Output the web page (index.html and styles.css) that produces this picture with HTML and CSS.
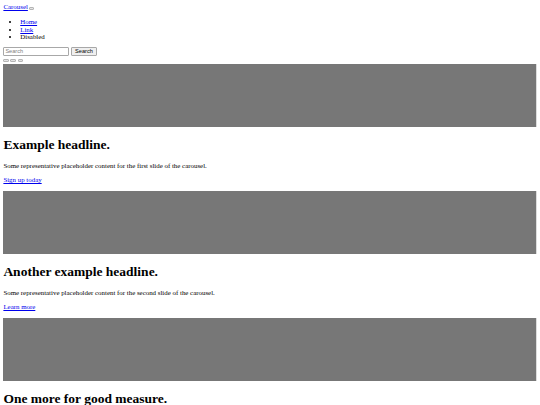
FILE: index.html
```html
<!DOCTYPE html>
<html lang="en">
<head>
<meta charset="utf-8">
<title>Carousel Template</title>
<link rel="stylesheet" href="styles.css">
</head>
<body>
<header>
  <nav>
    <div>
      <div class="brand-line">
        <a class="brand" href="#">Carousel</a>
        <button class="btn-empty" type="button"><span></span></button>
      </div>
      <div>
        <ul class="nav-list">
          <li><a href="#">Home</a></li>
          <li><a href="#">Link</a></li>
          <li><a class="disabled">Disabled</a></li>
        </ul>
        <form class="search">
          <input class="search-input" type="search" placeholder="Search" aria-label="Search">
          <button class="search-btn" type="submit">Search</button>
        </form>
      </div>
    </div>
  </nav>
</header>
<main>
  <div class="carousel">
    <div class="indicators">
      <button class="btn-empty" type="button"></button>
      <button class="btn-empty" type="button"></button>
      <button class="btn-empty" type="button"></button>
    </div>
    <div class="carousel-inner">
      <div class="item">
        <svg class="placeholder" width="100%" height="100%" xmlns="http://www.w3.org/2000/svg" aria-hidden="true" preserveAspectRatio="xMidYMid slice" focusable="false"><rect width="100%" height="100%" fill="#777"/></svg>
        <div class="container">
          <div class="caption">
            <h1>Example headline.</h1>
            <p>Some representative placeholder content for the first slide of the carousel.</p>
            <p><a href="#">Sign up today</a></p>
          </div>
        </div>
      </div>
      <div class="item">
        <svg class="placeholder" width="100%" height="100%" xmlns="http://www.w3.org/2000/svg" aria-hidden="true" preserveAspectRatio="xMidYMid slice" focusable="false"><rect width="100%" height="100%" fill="#777"/></svg>
        <div class="container">
          <div class="caption">
            <h1>Another example headline.</h1>
            <p>Some representative placeholder content for the second slide of the carousel.</p>
            <p><a href="#">Learn more</a></p>
          </div>
        </div>
      </div>
      <div class="item">
        <svg class="placeholder" width="100%" height="100%" xmlns="http://www.w3.org/2000/svg" aria-hidden="true" preserveAspectRatio="xMidYMid slice" focusable="false"><rect width="100%" height="100%" fill="#777"/></svg>
        <div class="container">
          <div class="caption">
            <h1>One more for good measure.</h1>
            <p>Some representative placeholder content for the third slide of this carousel.</p>
            <p><a href="#">Browse gallery</a></p>
          </div>
        </div>
      </div>
    </div>
  </div>
</main>
</body>
</html>
```
FILE: styles.css
```css
html {
  background: #fff;
}

body {
  margin: 3.375px;
  font-family: "Liberation Serif", "Times New Roman", serif;
  font-size: 6.9px;
  line-height: 7.7625px;
  color: #000;
}

a {
  color: #0000ee;
}

a.disabled {
  color: #000;
  text-decoration: none;
}

.brand-line {
  height: 7.7625px;
}

.nav-list {
  margin: 6.75px 0;
  padding-left: 16.875px;
}

.btn-empty {
  display: inline-block;
  box-sizing: border-box;
  width: 5.6px;
  height: 3.2px;
  padding: 0;
  margin: 0;
  border: 1px solid #b5b5b5;
  border-radius: 1px;
  background: #e4e4e4;
  vertical-align: baseline;
}

.brand-line .btn-empty {
  margin-left: -1px;
}

.search {
  display: flex;
  align-items: flex-start;
  gap: 1.6px;
  height: 8.86px;
  margin: -0.8px 0 0;
}

.search-input {
  box-sizing: border-box;
  width: 66px;
  height: 8.4px;
  margin: 0;
  padding: 0 1px;
  border: 1px solid #a8a8a8;
  border-radius: 1px;
  font-family: "Liberation Sans", Arial, sans-serif;
  font-size: 5.6px;
  background: #fff;
}

.search-input::placeholder {
  color: #808080;
}

.search-btn {
  box-sizing: border-box;
  width: 26px;
  height: 8.4px;
  margin: 0;
  padding: 0;
  border: 1px solid #a8a8a8;
  border-radius: 1px;
  background: #efefef;
  color: #000;
  font-family: "Liberation Sans", Arial, sans-serif;
  font-size: 5.6px;
  line-height: 6px;
}

.indicators {
  display: flex;
  align-items: flex-end;
  gap: 1.5px;
  height: 7.7625px;
}

.indicators .btn-empty {
  margin-bottom: 1.3px;
}

.placeholder {
  display: block;
  width: 100%;
  height: 63.28px;
}

h1 {
  font-size: 13.5px;
  line-height: 15.525px;
  margin: 10.1px 0 9.045px;
  font-weight: bold;
}

p {
  margin: 6.75px 0;
}
```
